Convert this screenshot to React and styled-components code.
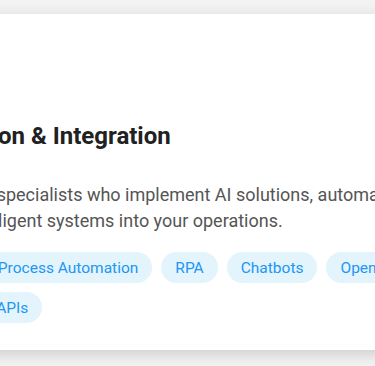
import React from 'react';
import styled, { createGlobalStyle } from 'styled-components';

const GlobalStyle = createGlobalStyle`
    html, body {
        margin: 0;
        padding: 0;
        background: #f3f3f3;
        overflow: hidden;
        font-family: Roboto, "Noto Sans", sans-serif;
    }
`;

const tags = ['ML Models', 'Process Automation', 'RPA', 'Chatbots', 'OpenAI', 'LangGraph', 'APIs'];

export default function App() {
    return <>
        <GlobalStyle />
        <Page>
            <Card>
                <Title>AI Automation &amp; Integration</Title>
                <Description>
                    Our in-house AI specialists who implement AI solutions, automate workflows,<br />
                    and embed intelligent systems into your operations.
                </Description>
                <TagList>
                    {tags.map((tag) => <Tag key={tag}>{tag}</Tag>)}
                </TagList>
            </Card>
        </Page>
    </>
}

const Page = styled.div`
    padding-top: 14px;
    height: 366px;
    box-sizing: border-box;
`;

const Card = styled.div`
    margin-left: -162px;
    width: 640px;
    background: #ffffff;
    box-shadow: 0 4px 14px rgba(0, 0, 0, 0.16);
    padding: 107px 32px 27px;
`;

const Title = styled.h2`
    margin: 0 0 31px;
    font-size: 24px;
    line-height: 30px;
    font-weight: 700;
    color: #212121;
`;

const Description = styled.p`
    margin: 0 0 18px;
    font-size: 18px;
    line-height: 26px;
    color: #555555;
    white-space: nowrap;
`;

const TagList = styled.div`
    display: flex;
    flex-wrap: wrap;
    gap: 9px;
`;

const Tag = styled.span`
    display: inline-flex;
    align-items: center;
    height: 31px;
    padding: 0 14px;
    border-radius: 16px;
    background: #e3f4fd;
    color: #2196f3;
    font-size: 15.5px;
`;
